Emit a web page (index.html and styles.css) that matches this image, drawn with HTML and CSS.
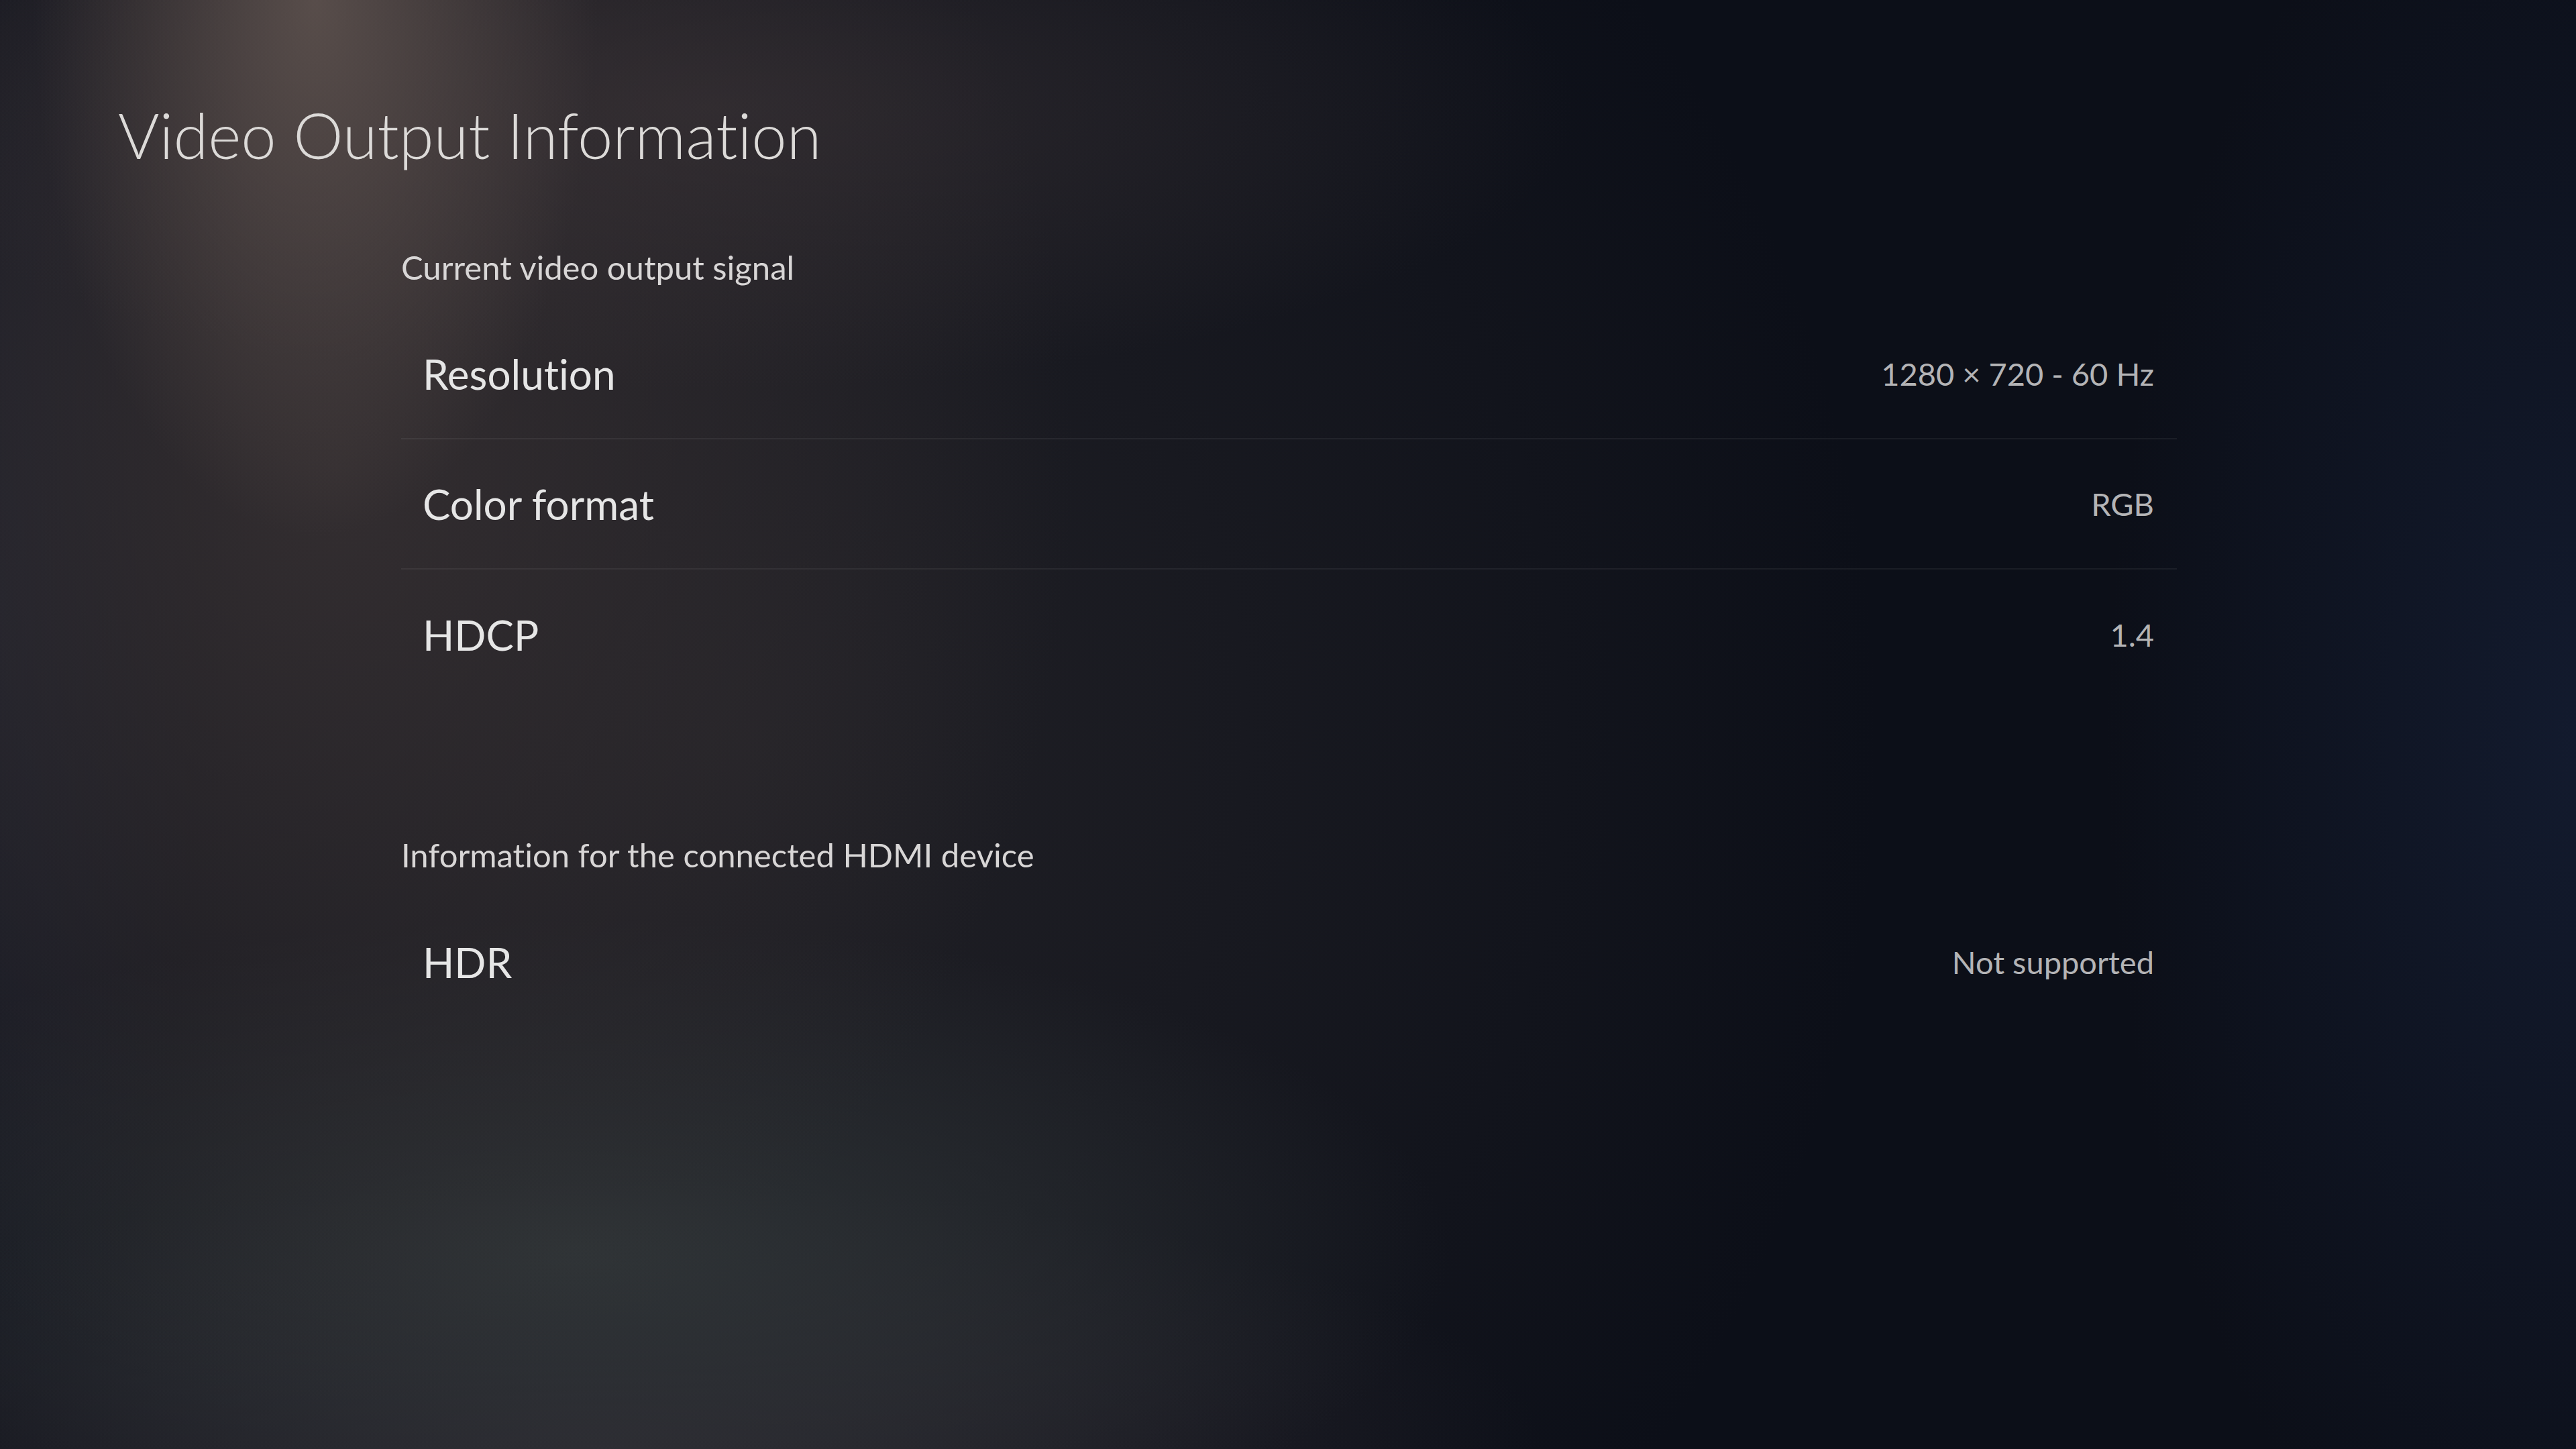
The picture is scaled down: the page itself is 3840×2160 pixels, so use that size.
FILE: index.html
```html
<!DOCTYPE html>
<html>
  <head>
    <title>Video Output Information</title>
    <link rel="stylesheet" href="styles.css">
  </head>
  <body>
    <div class="screen">
      <h1 class="page-title">Video Output Information</h1>

      <div class="info-list">
        <div class="info-section">
          <h2 class="section-title">Current video output signal</h2>
          <div class="info-row">
            <span class="info-label">Resolution</span>
            <span class="info-value">1280 × 720 - 60 Hz</span>
          </div>
          <div class="info-row">
            <span class="info-label">Color format</span>
            <span class="info-value">RGB</span>
          </div>
          <div class="info-row">
            <span class="info-label">HDCP</span>
            <span class="info-value">1.4</span>
          </div>
        </div>

        <div class="info-section">
          <h2 class="section-title">Information for the connected HDMI device</h2>
          <div class="info-row">
            <span class="info-label">HDR</span>
            <span class="info-value">Not supported</span>
          </div>
        </div>
      </div>
    </div>
  </body>
</html>
```
FILE: styles.css
```css
/* Page */
html, body {
  margin: 0;
  padding: 0;
}

body {
  width: 3840px;
  height: 2160px;
  overflow: hidden;
  font-family: Lato, "Open Sans", sans-serif;
  font-variant-ligatures: none;
  color: #e4e4e4;
  background-color: #0c0f18;
  background-image:
    radial-gradient(ellipse 420px 800px at 470px 0px, rgba(96, 84, 80, 0.85), rgba(96, 84, 80, 0) 100%),
    radial-gradient(ellipse 1300px 420px at 1050px 160px, rgba(70, 60, 62, 0.45), rgba(70, 60, 62, 0) 100%),
    radial-gradient(ellipse 1100px 1400px at 500px 700px, rgba(54, 48, 50, 0.9), rgba(54, 48, 50, 0) 100%),
    radial-gradient(ellipse 1300px 500px at 860px 1870px, rgba(50, 56, 58, 0.85), rgba(50, 56, 58, 0) 100%),
    radial-gradient(ellipse 1400px 400px at 900px 2160px, rgba(48, 44, 52, 0.8), rgba(48, 44, 52, 0) 100%),
    radial-gradient(ellipse 1700px 1800px at 1100px 1100px, rgba(36, 35, 40, 0.9), rgba(36, 35, 40, 0) 100%),
    radial-gradient(ellipse 700px 1400px at 3840px 1100px, rgba(24, 36, 64, 0.55), rgba(24, 36, 64, 0) 100%),
    radial-gradient(ellipse 300px 1200px at 0px 900px, rgba(30, 36, 56, 0.6), rgba(30, 36, 56, 0) 100%);
}

.screen {
  padding: 143px 0 0 176px;
}

/* Title */
.page-title {
  margin: 0;
  font-size: 94px;
  font-weight: 300;
  line-height: 116px;
  color: #dcdad8;
}

/* Info list */
.info-list {
  width: 2647px;
  margin: 109px 0 0 422px;
}

.info-section + .info-section {
  margin-top: 201px;
}

.section-title {
  margin: 0 0 33px 0;
  font-size: 49px;
  font-weight: 400;
  line-height: 60px;
  color: #d8d6d6;
}

.info-row {
  display: flex;
  justify-content: space-between;
  align-items: center;
  height: 194px;
  padding: 0 34px 0 32px;
  border-bottom: 2px solid rgba(255, 255, 255, 0.06);
  box-sizing: border-box;
}

.info-row:last-child {
  border-bottom: none;
}

.info-label {
  font-size: 62px;
  color: #e6e6e6;
}

.info-value {
  font-size: 47px;
  color: #b4b4b6;
}
```
